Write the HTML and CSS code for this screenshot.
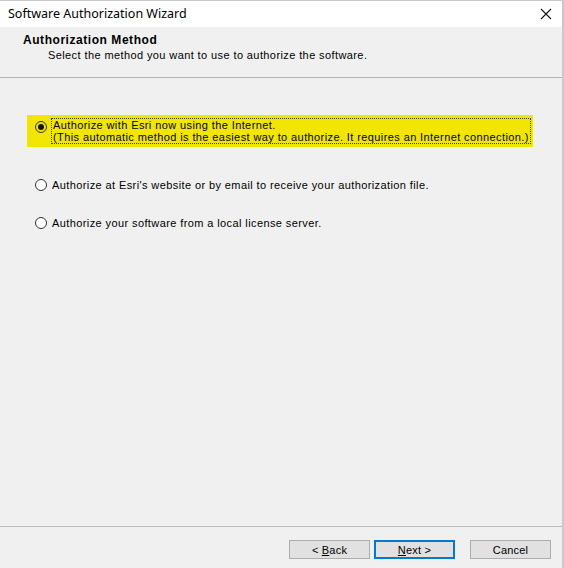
FILE: index.html
```html
<!DOCTYPE html>
<html lang="en">
<head>
    <meta charset="UTF-8">
    <meta name="viewport" content="width=device-width, initial-scale=1.0">
    <title>Software Authorization Wizard</title>
    <link rel="stylesheet" href="styles.css">
</head>
<body>
    <div class="window">
        <div class="titlebar">
            <span class="title">Software Authorization Wizard</span>
            <svg class="close" width="12" height="12" viewBox="0 0 12 12">
                <path d="M1 1 L11 11 M11 1 L1 11" stroke="#111" stroke-width="1.1" fill="none"/>
            </svg>
        </div>

        <div class="header">
            <h1>Authorization Method</h1>
            <p>Select the method you want to use to authorize the software.</p>
        </div>

        <div class="content">
            <label class="option selected">
                <span class="radio checked"></span>
                <span class="text focus">Authorize with Esri now using the Internet.<br>(This automatic method is the easiest way to authorize. It requires an Internet connection.)</span>
            </label>
            <label class="option second">
                <span class="radio"></span>
                <span class="text">Authorize at Esri's website or by email to receive your authorization file.</span>
            </label>
            <label class="option third">
                <span class="radio"></span>
                <span class="text">Authorize your software from a local license server.</span>
            </label>
        </div>

        <div class="footer">
            <button class="btn">&lt; <u>B</u>ack</button>
            <button class="btn default"><u>N</u>ext &gt;</button>
            <button class="btn cancel">Cancel</button>
        </div>
    </div>
</body>
</html>
```

FILE: styles.css
```css
* {
    box-sizing: border-box;
}
html, body {
    margin: 0;
    padding: 0;
}
body {
    width: 564px;
    height: 568px;
    font-family: "Liberation Sans", Arial, sans-serif;
    font-size: 11px;
    letter-spacing: 0.4px;
    color: #000;
    background-color: #fff;
}
.window {
    width: 564px;
    height: 568px;
    display: flex;
    flex-direction: column;
    background-color: #f0f0f0;
    border-top: 1px solid #c8c8c8;
    border-right: 2px solid #c8c8c8;
}
.titlebar {
    height: 26px;
    flex-shrink: 0;
    background-color: #fff;
    display: flex;
    align-items: center;
    justify-content: space-between;
    padding: 0 10px 1px 8px;
}
.title {
    font-family: "Noto Sans", sans-serif;
    font-size: 12.5px;
    letter-spacing: 0;
    color: #000;
}
.close {
    display: block;
}
.header {
    height: 51px;
    flex-shrink: 0;
    padding: 7px 0 0 23px;
    border-bottom: 1px solid #b4b4b4;
}
.header h1 {
    margin: 0;
    font-size: 12px;
    font-weight: bold;
    letter-spacing: 0.55px;
    line-height: 13px;
}
.header p {
    margin: 2px 0 0 25px;
    line-height: 13px;
}
.content {
    flex: 1;
    display: flex;
    flex-direction: column;
    padding: 37px 0 0 27px;
}
.option {
    display: flex;
    align-items: flex-start;
    line-height: 12px;
    padding-left: 8px;
}
.option.selected {
    width: 506px;
    height: 32px;
    background-color: #f2e600;
    padding-top: 4px;
}
.option.second {
    margin-top: 32px;
}
.option.third {
    margin-top: 26px;
}
.radio {
    width: 12px;
    height: 12px;
    flex-shrink: 0;
    border: 1px solid #333;
    border-radius: 50%;
    background-color: #fff;
    margin-right: 5px;
    display: flex;
    align-items: center;
    justify-content: center;
}
.option.selected .radio {
    background-color: transparent;
    margin-top: 2px;
}
.radio.checked::after {
    content: "";
    width: 6px;
    height: 6px;
    border-radius: 50%;
    background-color: #111;
}
.text.focus {
    outline: 1px dotted #333;
    outline-offset: 0;
    padding: 0 1px;
}
.footer {
    height: 42px;
    flex-shrink: 0;
    border-top: 1px solid #bdbdbd;
    display: flex;
    align-items: flex-start;
    padding: 13px 0 0 289px;
}
.btn {
    width: 81px;
    height: 19px;
    padding: 0;
    font-family: "Liberation Sans", Arial, sans-serif;
    font-size: 11px;
    letter-spacing: 0.2px;
    color: #000;
    background-color: #e1e1e1;
    border: 1px solid #adadad;
    border-radius: 0;
}
.btn.default {
    margin-left: 4px;
    border: 2px solid #0078d7;
}
.btn.cancel {
    margin-left: 15px;
}
```
